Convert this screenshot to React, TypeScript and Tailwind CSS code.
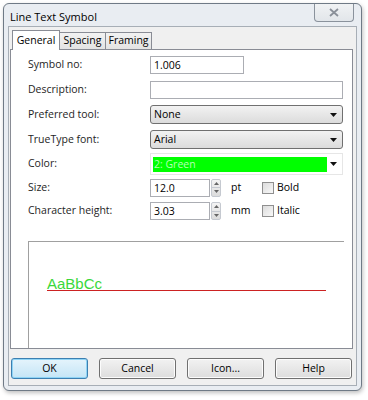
import { useState } from 'react'

const font = { fontFamily: '"Open Sans", "Noto Sans", Arial, sans-serif' }

function Spinner() {
    return (
        <div className="flex flex-col w-[10px] h-[18px] ml-[1px] border border-[#c5c9d0] rounded-[2px] bg-gradient-to-b from-[#f4f4f4] to-[#dcdcdc]">
            <div className="flex-1 flex items-center justify-center border-b border-[#c5c9d0]">
                <svg width="5" height="3" viewBox="0 0 5 3"><path d="M0 3 L2.5 0 L5 3 Z" fill="#666" /></svg>
            </div>
            <div className="flex-1 flex items-center justify-center">
                <svg width="5" height="3" viewBox="0 0 5 3"><path d="M0 0 L2.5 3 L5 0 Z" fill="#666" /></svg>
            </div>
        </div>
    )
}

function Arrow() {
    return <svg width="7" height="4" viewBox="0 0 7 4"><path d="M0 0 L7 0 L3.5 4 Z" fill="#111" /></svg>
}

function Combo({ value }: { value: string }) {
    return (
        <div className="w-[193px] h-[19px] flex items-center justify-between px-[3px] border border-[#707070] rounded-[3px] bg-gradient-to-b from-[#f2f2f2] to-[#dcdcdc] text-[10.5px]">
            <span>{value}</span>
            <span className="mr-[2px]"><Arrow /></span>
        </div>
    )
}

function Row({ label, children, h = 25 }: { label: string; children: React.ReactNode; h?: number }) {
    return (
        <div className="flex items-center" style={{ height: h }}>
            <div className="w-[122px] text-[10.5px] text-[#1e1e1e]">{label}</div>
            {children}
        </div>
    )
}

function Check({ label }: { label: string }) {
    const [on, setOn] = useState(false)
    return (
        <label className="flex items-center gap-[3px] text-[10.5px] cursor-pointer" onClick={() => setOn(!on)}>
            <span className="w-[12px] h-[12px] border border-[#8f8f8f] bg-gradient-to-br from-[#dcdcdc] to-[#f8f8f8]">
                {on && <span className="block text-[10px] leading-[10px] text-center">✓</span>}
            </span>
            {label}
        </label>
    )
}

function Btn({ label, primary }: { label: string; primary?: boolean }) {
    return (
        <button
            className={
                primary
                    ? 'w-[77px] h-[21px] text-[10.5px] rounded-[3px] border border-[#3c7fb1] bg-gradient-to-b from-[#e5f4fc] to-[#c4e5f6] shadow-[inset_0_0_0_1px_#8fd4f5]'
                    : 'w-[77px] h-[21px] text-[10.5px] rounded-[3px] border border-[#707070] bg-gradient-to-b from-[#f2f2f2] to-[#dddddd] shadow-[inset_0_0_0_1px_#fcfcfc]'
            }
        >
            {label}
        </button>
    )
}

function App() {
    const [tab, setTab] = useState('General')
    const tabs = ['General', 'Spacing', 'Framing']

    return (
        <div className="w-[368px] h-[400px] bg-white pt-[3px] pl-[3px]" style={font}>
            <div className="w-[359px] h-[388px] border border-[#6f7a86] rounded-[6px] bg-[#e9edf2] shadow-[1px_2px_4px_rgba(0,0,0,0.25)] flex flex-col">
                {/* title bar */}
                <div className="h-[22px] flex justify-between">
                    <div className="pl-[6px] pt-[5px] text-[11px] text-black">Line Text Symbol</div>
                    <div className="mr-[7px] w-[40px] h-[18px] border border-t-0 border-[#8a929c] rounded-b-[4px] bg-gradient-to-b from-[#f0f2f4] to-[#e2e6ea] flex items-center justify-center">
                        <svg width="10" height="9" viewBox="0 0 10 9">
                            <path d="M1 1 L9 8 M9 1 L1 8" stroke="#8a9099" strokeWidth="1.8" fill="none" />
                        </svg>
                    </div>
                </div>

                {/* client */}
                <div className="flex-1 mx-[4px] mb-[4px] border border-[#a7aeb6] bg-[#f0f0f0] flex flex-col px-[1px]">
                    <div className="flex items-end h-[22px] pl-[2px]">
                        {tabs.map((t) =>
                            t === tab ? (
                                <div
                                    key={t}
                                    onClick={() => setTab(t)}
                                    className="h-[20px] w-[48px] text-[10.5px] bg-white border border-b-0 border-[#898c95] relative top-[1px] z-10 flex items-center justify-center"
                                >
                                    {t}
                                </div>
                            ) : (
                                <div
                                    key={t}
                                    onClick={() => setTab(t)}
                                    className="h-[17px] w-[46px] text-[10.5px] bg-gradient-to-b from-[#f2f2f2] to-[#e3e3e3] border border-b-0 border-l-0 border-[#898c95] flex items-center justify-center"
                                >
                                    {t}
                                </div>
                            )
                        )}
                    </div>
                    <div className="w-[343px] h-[300px] border border-[#898c95] bg-white pl-[17px] pt-[2px] overflow-hidden">
                        <Row label="Symbol no:">
                            <div className="w-[94px] h-[18px] border border-[#abadb3] px-[3px] text-[10.5px] leading-[16px]">1.006</div>
                        </Row>
                        <Row label="Description:">
                            <div className="w-[193px] h-[18px] border border-[#abadb3]" />
                        </Row>
                        <Row label="Preferred tool:">
                            <Combo value="None" />
                        </Row>
                        <Row label="TrueType font:">
                            <Combo value="Arial" />
                        </Row>
                        <Row label="Color:" h={24}>
                            <div className="w-[193px] h-[22px] border border-[#e6e6e6] flex items-center justify-between pl-[2px] pr-[5px]">
                                <div className="w-[174px] h-[15px] bg-[#00ff00] text-[10.5px] text-[#b5ffb5] leading-[15px] pl-[1px]">2: Green</div>
                                <Arrow />
                            </div>
                        </Row>
                        <Row label="Size:" h={23}>
                            <div className="w-[60px] h-[18px] border border-[#abadb3] px-[3px] text-[10.5px] leading-[16px]">12.0</div>
                            <Spinner />
                            <span className="ml-[10px] w-[31px] text-[10.5px]">pt</span>
                            <Check label="Bold" />
                        </Row>
                        <Row label="Character height:" h={24}>
                            <div className="w-[60px] h-[18px] border border-[#abadb3] px-[3px] text-[10.5px] leading-[16px]">3.03</div>
                            <Spinner />
                            <span className="ml-[10px] w-[31px] text-[10.5px]">mm</span>
                            <Check label="Italic" />
                        </Row>

                        {/* preview */}
                        <div className="mt-[18px] w-[316px] h-[120px] border-t border-l border-[#a0a0a0] pl-[18px] pt-[34px]">
                            <div className="relative w-[279px]">
                                <div className="text-[15px] leading-[16px] text-[#3ad83a]" style={{ fontFamily: '"Liberation Sans", Arial, sans-serif' }}>AaBbCc</div>
                                <div className="h-[1px] bg-[#cc2222] w-full absolute top-[14px]" />
                            </div>
                        </div>
                    </div>

                    {/* buttons */}
                    <div className="flex gap-[11px] pl-[1px] mt-[9px]">
                        <Btn label="OK" primary />
                        <Btn label="Cancel" />
                        <Btn label="Icon..." />
                        <Btn label="Help" />
                    </div>
                </div>
            </div>
        </div>
    )
}

export default App
